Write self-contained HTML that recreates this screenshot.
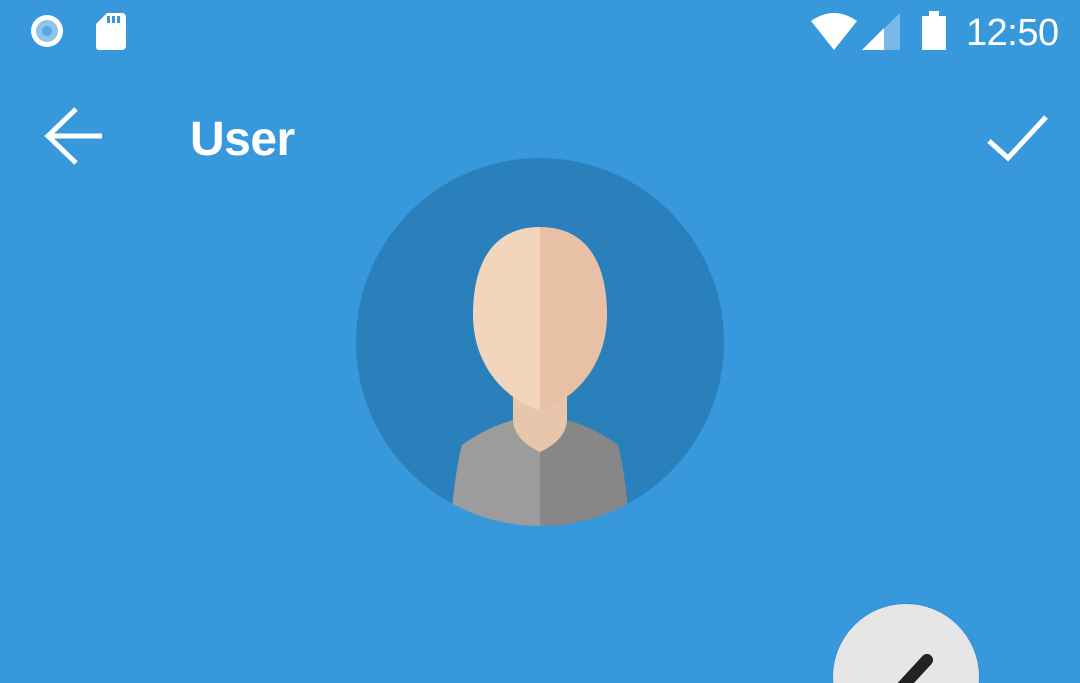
<!DOCTYPE html>
<html><head><meta charset="utf-8"><style>
html,body{margin:0;padding:0;}
body{width:1080px;height:683px;background:#3798dc;position:relative;overflow:hidden;font-family:"Liberation Sans",sans-serif;}
.t{position:absolute;color:#fff;line-height:1;}
</style></head><body>
<svg width="1080" height="683" style="position:absolute;left:0;top:0;display:block">
  <circle cx="47" cy="31" r="16" fill="#fff"/>
  <circle cx="47" cy="31" r="11" fill="#8dc4ee"/>
  <circle cx="47" cy="31" r="5" fill="#55a6e2"/>
  <path d="M107 13 H122 a4 4 0 0 1 4 4 V46 a4 4 0 0 1 -4 4 H99 a3 3 0 0 1 -3 -3 V24 Z" fill="#fff"/>
  <rect x="107" y="16" width="3" height="7" fill="#3798dc"/>
  <rect x="112" y="16" width="3" height="7" fill="#3798dc"/>
  <rect x="117" y="16" width="3" height="7" fill="#3798dc"/>
  <path d="M811 21 Q834 5 857 21 L834 50 Z" fill="#fff"/>
  <path d="M862 50 L900 13 V50 Z" fill="#7ab8e8"/>
  <path d="M862 50 L884 28 V50 Z" fill="#fff"/>
  <rect x="922" y="16" width="24" height="34" fill="#fff"/>
  <rect x="929" y="11" width="10" height="6" fill="#fff"/>
  <path d="M102 136 H50 M76 109 L48 136 L76 163" stroke="#fff" stroke-width="5" fill="none"/>
  <path d="M989 141 L1008 158 L1046 117" stroke="#fff" stroke-width="5" fill="none"/>
  <defs><clipPath id="c"><circle cx="540" cy="342" r="184"/></clipPath></defs>
  <circle cx="540" cy="342" r="184" fill="#2a80bb"/>
  <g clip-path="url(#c)">
    <path d="M513 410 L513 420 Q485 428 462 445 Q455 470 450 530 L540 530 V452 Z" fill="#9c9c9c"/>
    <path d="M567 410 L567 420 Q595 428 618 445 Q625 470 630 530 L540 530 V452 Z" fill="#878787"/>
    <path d="M513 385 H567 V420 Q566 440 540 452 Q514 440 513 420 Z" fill="#e8c6ac"/>
    <path d="M540 227 C495 227 473 260 473 315 C473 365 505 400 540 410 Z" fill="#f1d6bc"/>
    <path d="M540 227 C585 227 607 260 607 315 C607 365 575 400 540 410 Z" fill="#e8c0a6"/>
  </g>
  <circle cx="906" cy="677" r="74" fill="#2a80bb" opacity="0.25"/>
  <circle cx="906" cy="677" r="73" fill="#e6e6e6"/>
  <path d="M927 660 L903 686" stroke="#222" stroke-width="12" stroke-linecap="round"/>
</svg>
<div class="t" style="left:966px;top:14px;font-size:38px;letter-spacing:-0.5px;">12:50</div>
<div class="t" style="left:190px;top:116px;font-size:48px;font-weight:bold;letter-spacing:-0.5px;">User</div>
</body></html>
